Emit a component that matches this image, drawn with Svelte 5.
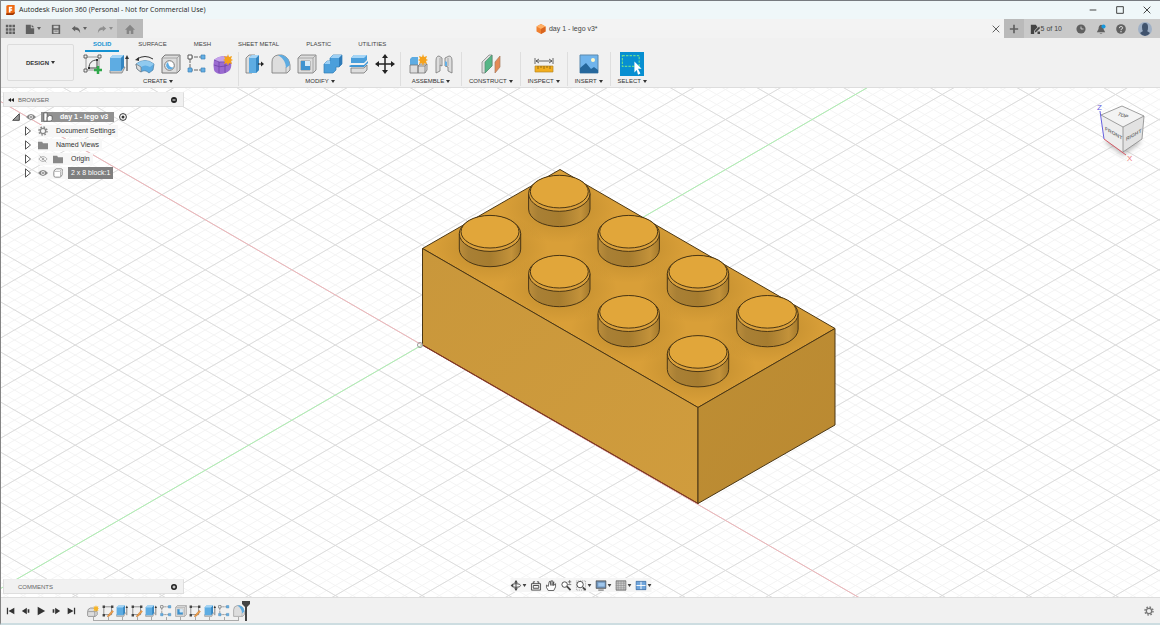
<script lang="ts">
	type Group = { label: string; tools: string[] };

	const tabs = ['SOLID', 'SURFACE', 'MESH', 'SHEET METAL', 'PLASTIC', 'UTILITIES'];
	let activeTab = $state('SOLID');

	const groups: Group[] = [
		{ label: 'CREATE', tools: ['sketch', 'extrude', 'revolve', 'hole', 'pattern', 'form'] },
		{ label: 'MODIFY', tools: ['press', 'fillet', 'shell', 'combine', 'split', 'move'] },
		{ label: 'ASSEMBLE', tools: ['component', 'joint'] },
		{ label: 'CONSTRUCT', tools: ['plane'] },
		{ label: 'INSPECT', tools: ['measure'] },
		{ label: 'INSERT', tools: ['image'] },
		{ label: 'SELECT', tools: ['select'] }
	];

	const features = [
		'newBody', 'sketchEdit', 'extrude', 'sketchEdit', 'extrude', 'pattern',
		'shell', 'sketchEdit', 'extrude', 'pattern', 'fillet'
	];

	const playback = ['first', 'prev', 'play', 'next', 'last'];

	// 20x20 tool icons
	const toolIcons: Record<string, string> = {
		sketch:
			'<path d="M3 3h13v13H3z" fill="none" stroke="#999"/><path d="M6 14c0-5 3-8 8-8v8z" fill="none" stroke="#444"/><path d="M1 1h3v3H1zM15 1h3v3h-3zM1 15h3v3H1z" fill="#eee" stroke="#444" stroke-width=".8"/><path d="M5 13h2v2H5zM13 5h2v2h-2z" fill="#333"/><path d="M11 16h8M15 12v8" stroke="#2fa84a" stroke-width="2.5"/>',
		sketchEdit:
			'<path d="M3 3h13v13H3z" fill="none" stroke="#777" stroke-width="1.300"/><path d="M1 1h4v4H1zM15 1h4v4h-4zM1 15h4v4H1z" fill="#444"/><path d="M10 17l7-8 2 2-6 7-4 2z" fill="#f0a04b" stroke="#b9671b" stroke-width=".7"/>',
		newBody:
			'<path d="M1 18v-7q0-5 5-6h5q5 1 6 7v4l-3 3H2z" fill="#ddd" stroke="#666"/><path d="M2 11h11v8M13 11l4-2" fill="none" stroke="#777"/><path d="M15 0l1 3 3-1-1 3 2 1-2 1 1 3-3-1-1 3-1-3-3 1 1-3-2-1 2-1-1-3 3 1z" fill="#f5b52b"/>',
		extrude:
			'<path d="M1 16l4-3h11l-3 6H1z" fill="#c9c9c9" stroke="#777" stroke-width=".7"/><path d="M1 4l3-3h11v12l-3 4H1z" fill="#5eace2"/><path d="M1 4l3-3h11l-3 3z" fill="#a5d5f6"/><path d="M12 4l3-3v12l-3 4z" fill="#3485c0"/><path d="M18 17V4" stroke="#333"/><path d="M16 5l2-4 2 4z" fill="#333"/>',
		revolve:
			'<path d="M2 5q8-5 16 0" fill="none" stroke="#333"/><path d="M0 6l4-3v4z" fill="#333"/><path d="M1 10q9-7 18 0l-1 6-4 3q-4-4-8-1l-4-3z" fill="#5eace2" stroke="#477da5" stroke-width=".7"/><path d="M1 10q9-7 18 0l-4 3q-5-3-9 0z" fill="#90caef"/><path d="M1 10l5 3v5l-4-3z" fill="#ddd" stroke="#777" stroke-width=".7"/>',
		hole:
			'<path d="M1 4l3-3h15v15l-3 3H1z" fill="#ddd" stroke="#777"/><path d="M16 4v15M1 4h15l3-3" fill="none" stroke="#999" stroke-width=".8"/><circle cx="8.500" cy="11.500" r="4.800" fill="#fff" stroke="#777"/><path d="M7 8a4 4 0 1 0 5.500 5.500q-5 0-5.500-5.500z" fill="#5eace2"/>',
		pattern:
			'<path d="M16 3H3v13h13" fill="none" stroke="#666" stroke-dasharray="4 1"/><path d="M1 1h4v4H1z" fill="#fff" stroke="#555"/><path d="M14 1h4v4h-4zM14 14h4v4h-4zM1 14h4v4H1z" fill="#63afe5" stroke="#3f83b5" stroke-width=".7"/>',
		form:
			'<path d="M1 6q4-4 12-4 5 1 5 4 1 6-1 10-4 4-10 4-5-1-6-4-1-6 0-10z" fill="#9a6bd0"/><path d="M1 6q4-4 12-4 5 1 5 4-3 2-6 2-7 1-11-2z" fill="#c4a2ea"/><path d="M1 11q6 3 11 1 4-1 6-3M1 6q5 3 11 2l6-2M6 8v11M12 8v11" fill="none" stroke="#6e42a7" stroke-width=".8"/><path d="M15 0l1 3 3-1-1 3 2 1-2 1 1 3-3-1-1 3-1-3-3 1 1-3-2-1 2-1-1-3 3 1z" fill="#f5a21b"/>',
		press:
			'<path d="M1 4l3-3h6L7 4v15H1z" fill="#ddd" stroke="#777" stroke-width=".8"/><path d="M4 4l3-3h7v15l-3 3H4z" fill="#5eace2"/><path d="M11 4l3-3v15l-3 3z" fill="#3485c0"/><path d="M4 4l3-3h7l-3 3z" fill="#a5d5f6"/><path d="M13 10h4" stroke="#222"/><path d="M16 7.500l3 2.500-3 2.500z" fill="#222"/>',
		fillet:
			'<path d="M1 19V8q0-6 6-7h4q7 2 8 10v5l-3 3z" fill="#ddd" stroke="#777" stroke-width=".8"/><path d="M15 19v-6" fill="none" stroke="#999" stroke-width=".8"/><path d="M7 1h4q7 2 8 10l-4 3q0-8-8-13z" fill="#5eace2"/>',
		shell:
			'<path d="M1 4l3-3h15v15l-3 3H1z" fill="#ddd" stroke="#777" stroke-width=".8"/><path d="M16 4v15M1 4h15l3-3" fill="none" stroke="#999" stroke-width=".8"/><path d="M4 7h9v9H4z" fill="#fff" stroke="#888" stroke-width=".8"/><path d="M4 7h4v5h5v4H4z" fill="#3f93d0"/><path d="M8 7h5v5H8z" fill="#d5eaf8"/>',
		combine:
			'<path d="M7 4l3-3h9v9l-3 3h-3v3l-3 3H1v-9l3-3h3z" fill="#4b9fdb" stroke="#347eb5" stroke-width=".7"/><path d="M7 4l3-3h9l-3 3zM1 10l3-3h3v3z" fill="#9dd0f5"/><path d="M16 4l3-3v9l-3 3z" fill="#2f7bb8"/>',
		split:
			'<path d="M2 4l3-3h13v5l-3 3H2z" fill="#4b9fdb"/><path d="M2 4l3-3h13l-3 3z" fill="#a5d5f6"/><path d="M0 12l2-1h13l4-4v2l-4 4H1z" fill="#3f96d5"/><path d="M2 14h13l3-3v5l-3 3H2z" fill="#ddd" stroke="#777" stroke-width=".8"/>',
		move:
			'<path d="M10 3v14M3 10h14" stroke="#222" stroke-width="1.500"/><path d="M10 0l3 4H7zM10 20l3-4H7zM0 10l4-3v6zM20 10l-4-3v6z" fill="#222"/>',
		component:
			'<path d="M2 5l2-2h6v8H2z" fill="#5eace2"/><path d="M2 11h8v8H2zM10 12l2-2h7v6l-2 3h-7z" fill="#ddd" stroke="#777" stroke-width=".8"/><path d="M10 12h7v7M17 12l2-2" fill="none" stroke="#777" stroke-width=".8"/><path d="M15 0l1 3 3-1-1 3 2 1-2 1 1 3-3-1-1 3-1-3-3 1 1-3-2-1 2-1-1-3 3 1z" fill="#f5a21b"/>',
		joint:
			'<path d="M2 7q0-5 3-5l3 2v8l-2-1v6l-4 2zM18 7q0-5-3-5l-4 2v8l3 1v4l4 2z" fill="#ddd" stroke="#777" stroke-width=".8"/><path d="M6 4v7M14 4v8" stroke="#999" stroke-width=".8"/><path d="M11 7v5h2V8z" fill="#63afe5"/>',
		plane:
			'<path d="M1 8l7-7h3v11l-7 7H1z" fill="#ddd" stroke="#888" stroke-width=".8"/><path d="M4 8l7-7v11l-7 7z" fill="#56b586" stroke="#528e70" stroke-width=".7"/><path d="M14 8l5-6v11l-5 6z" fill="#e58a55" stroke="#a87b5e" stroke-width=".7"/>',
		measure:
			'<path d="M1 12h18v6H1z" fill="#f3ae1e" stroke="#b78825" stroke-width=".7"/><path d="M4 12v3M7 12v2M10 12v3M13 12v2M16 12v3" stroke="#715310" stroke-width=".7"/><path d="M1 4v6M19 4v6M2 7h16M5 5L2 7l3 2M15 5l3 2-3 2" fill="none" stroke="#444" stroke-width=".8"/>',
		image:
			'<path d="M1 1h18v18H1z" fill="#70b4ec" stroke="#5b89ad"/><circle cx="14" cy="6" r="2" fill="#fff8c9"/><path d="M1 19v-5l6-5 5 6 3-2 4 3v3z" fill="#25679c"/>',
		select:
			'<path d="M0 0h20v20H0z" fill="#078fd1"/><path d="M2 3h14v9H2z" fill="none" stroke="#67da94" stroke-dasharray="2 1"/><path d="M12 8l6 6h-3l2 4-2 1-1-4-2 2z" fill="#fff"/>'
	};

	// 12x12 monochrome icons
	const smallIcons: Record<string, string> = {
		grid: '<path d="M1 1h3v3H1zM5 1h3v3H5zM9 1h3v3H9zM1 5h3v3H1zM5 5h3v3H5zM9 5h3v3H9zM1 9h3v3H1zM5 9h3v3H5zM9 9h3v3H9z"/>',
		file: '<path d="M1 1h6v4h4v7H1zM8 1l3 3H8z"/>',
		save: '<path d="M1 1h10v11H1z"/><path d="M3 2h6v3H3zM3 7h6v4H3z" fill="#c9c9c9"/><path d="M4 8h4v1H4z"/>',
		undo: '<path d="M5 2v2q6 0 6 7Q9 7 5 7v2L1 5.500z"/>',
		redo: '<path d="M7 2v2Q1 4 1 11q2-4 6-4v2l4-3.500z"/>',
		home: '<path d="M6 1l6 6h-2v5H7V8H5v4H2V7H0z"/>',
		plus: '<path d="M5 1h2v4h4v2H7v4H5V7H1V5h4z"/>',
		close: '<path d="M2 2l8 8M10 2l-8 8" stroke="currentColor"/>',
		minimize: '<path d="M2 6h8" stroke="currentColor"/>',
		maximize: '<path d="M2 2h8v8H2z" fill="none" stroke="currentColor"/>',
		jobs: '<path d="M1 1h6l2 3-4 4v4H1z"/><path d="M6 8l5-5 1 2-5 5H6z"/><path d="M9 9h3v3H9z"/>',
		clock: '<circle cx="6" cy="6" r="5.500"/><path d="M6 3v3h3" fill="none" stroke="#ddd"/>',
		bell: '<path d="M6 1q3 1 3 5l2 4H1l2-4q0-4 3-5zM4 11h4l-2 1z"/><circle cx="9" cy="3" r="2.500" fill="#1798dd"/>',
		help: '<circle cx="6" cy="6" r="5.800"/><path d="M4 5q0-2 2-2t2 1.500Q8 6 6 6.500v1" fill="none" stroke="#eee"/><circle cx="6" cy="9.200" r=".8" fill="#eee"/>',
		first: '<path d="M1 2h1.500v8H1zM10 2v8L3 6z"/>',
		prev: '<path d="M7 2v8L1 6zM8 4h2v4H8z"/>',
		play: '<path d="M2 1l9 5-9 5z"/>',
		next: '<path d="M5 2v8l6-4zM2 4h2v4H2z"/>',
		last: '<path d="M9.500 2H11v8H9.500zM2 2v8l7-4z"/>',
		gear: '<circle cx="6" cy="6" r="3.200" fill="none" stroke="currentColor" stroke-width="1.500"/><circle cx="6" cy="6" r="4.800" fill="none" stroke="currentColor" stroke-width="1.700" stroke-dasharray="1.900 1.870"/>',
		eye: '<path d="M0 6q6-7 12 0-6 7-12 0z"/><circle cx="6" cy="6" r="2.300" fill="#eee"/><circle cx="6" cy="6" r="1.200"/>',
		eyeOff: '<g opacity=".7"><path d="M1 6q5-6 10 0-5 6-10 0zM2 2l8 8" fill="none" stroke="currentColor"/><circle cx="6" cy="6" r="1.500"/></g>',
		folder: '<path d="M0 2h5l1 2h6v7H0z"/>',
		body: '<path d="M1 5q0-3 3-4h6q2 0 1 3v4q-1 3-3 3H3q-2 0-2-2z" fill="#fff" stroke="#777"/><path d="M9 4v6M2 4h6l2-2" fill="none" stroke="#aaa"/>',
		root: '<path d="M1 1h4v10H1z" fill="#fff" stroke="#555"/><path d="M5 6l3-2 3 1v4l-2 2H5z" fill="#fff" stroke="#555"/>',
		open: '<path d="M10 2v8H2z" fill="#999" stroke="#333"/>',
		closed: '<path d="M3 1l6 5-6 5z" fill="#fff" stroke="#333"/>',
		orbit: '<path d="M6 1v10" stroke="currentColor"/><ellipse cx="6" cy="6" rx="5" ry="2" fill="none" stroke="currentColor"/><path d="M6 0l2 3H4zM6 12l2-3H4zM0 6l3-2v4z"/>',
		look: '<path d="M1 4h10v7H1zM3 4V2h2M9 4V2H7M3 6h6v3H3z" fill="none" stroke="currentColor"/>',
		pan: '<path d="M3 7L1 5.500q-1 2 2 6h6l2-4V4L9 6V2L8 6V1H6v5L5 1 4 2z" fill="#fff" stroke="currentColor" stroke-width=".9"/>',
		zoom: '<circle cx="4.500" cy="5" r="3" fill="#fff" stroke="currentColor"/><path d="M7 7l4 4" stroke="currentColor" stroke-width="2"/><path d="M8 2h4M10 0v4M8 5h4" stroke="currentColor" stroke-width=".7"/>',
		fit: '<path d="M1 1h10v10H1z" fill="none" stroke="#999" stroke-dasharray="1 1"/><circle cx="5" cy="5" r="3.500" fill="#fff" stroke="currentColor"/><path d="M8 8l3 3" stroke="currentColor" stroke-width="2"/>',
		display: '<path d="M.5 1h11v8H.5z" fill="#7095bd" stroke="#555"/><path d="M3 3h7v4H3z" fill="#9fc6eb"/><path d="M3 11h6" stroke="#555"/>',
		lines: '<path d="M.5 1h11v10H.5z" fill="#ccc" stroke="#666"/><path d="M3 1v10M6 1v10M9 1v10M0 3.500h11M0 6h11M0 8.500h11" stroke="#888" stroke-width=".6"/>',
		views: '<path d="M.5 1.500h11v9H.5z" fill="#6fa5dc" stroke="#4574a8"/><path d="M6 2v8M1 6h10" stroke="#fff"/>'
	};

	const navTools = [
		{ icon: 'orbit', menu: true },
		{ icon: 'look', menu: false },
		{ icon: 'pan', menu: false },
		{ icon: 'zoom', menu: false },
		{ icon: 'fit', menu: true },
		{ icon: 'display', menu: true },
		{ icon: 'lines', menu: true },
		{ icon: 'views', menu: true }
	];

	const tree = [
		{ label: 'Document Settings', icons: ['gear'] },
		{ label: 'Named Views', icons: ['folder'] },
		{ label: 'Origin', icons: ['eyeOff', 'folder'] },
		{ label: '2 x 8 block:1', icons: ['eye', 'body'], selected: true }
	];

	// isometric ground grid around the model origin
	const origin = { x: 422, y: 345 };
	const slope = 0.5779;
	const cell = 50.1;

	function gridPath(step: number) {
		let d = '';
		const count = Math.ceil(1100 / step);
		for (let k = -count; k <= count; k++) {
			const y = origin.y + k * step;
			d += `M${origin.x - 800} ${y - 800 * slope}L${origin.x + 1200} ${y + 1200 * slope}`;
			d += `M${origin.x - 800} ${y + 800 * slope}L${origin.x + 1200} ${y - 1200 * slope}`;
		}
		return d;
	}

	const minorGrid = gridPath(cell / 5);
	const majorGrid = gridPath(cell);

	// back to front, so nearer studs cover the ones behind
	const studs = [
		[559.3, 191.6],
		[490, 231.7],
		[628.7, 231.7],
		[559.3, 271.7],
		[698, 271.7],
		[628.7, 311.8],
		[767.4, 311.8],
		[698, 351.9]
	];
</script>

{#snippet tool(name: string)}
	<svg class="tool-icon" viewBox="0 0 20 20" aria-hidden="true">{@html toolIcons[name]}</svg>
{/snippet}

{#snippet glyph(name: string)}
	<svg class="glyph" viewBox="0 0 12 12" aria-hidden="true">{@html smallIcons[name]}</svg>
{/snippet}

{#snippet caret()}
	<svg class="caret" viewBox="0 0 4 3" aria-hidden="true"><path d="M0 0h4L2 3z" /></svg>
{/snippet}

<div class="app">
	<header class="titlebar">
		<svg class="logo" viewBox="0 0 10 12" aria-hidden="true">
			<path d="M0 1l2-1h8v10l-2 2H0z" fill="#ee6a12" />
			<path d="M0 10h8l2-2v2l-2 2H0z" fill="#9c3504" />
			<path d="M3 2h4v2H5v1h2v2H5v2H3z" fill="#fff" />
		</svg>
		<h1>Autodesk Fusion 360 (Personal - Not for Commercial Use)</h1>
		<div class="window-buttons">
			<button aria-label="Minimize">{@render glyph('minimize')}</button>
			<button aria-label="Maximize">{@render glyph('maximize')}</button>
			<button aria-label="Close window">{@render glyph('close')}</button>
		</div>
	</header>

	<div class="appbar">
		<div class="quick">
			<button aria-label="Data panel">{@render glyph('grid')}</button>
			<button aria-label="File">{@render glyph('file')}{@render caret()}</button>
			<button aria-label="Save">{@render glyph('save')}</button>
			<button aria-label="Undo">{@render glyph('undo')}{@render caret()}</button>
			<button class="muted" aria-label="Redo">{@render glyph('redo')}{@render caret()}</button>
		</div>
		<button class="home" aria-label="Home">{@render glyph('home')}</button>
		<div class="document">
			<svg class="doc-icon" viewBox="0 0 10 10" aria-hidden="true">
				<path d="M5 0l4.500 2.500v5L5 10 .5 7.500v-5z" fill="#f08030" />
				<path d="M5 0l4.500 2.500L5 5 .5 2.500z" fill="#ffb066" />
				<path d="M5 5l4.500-2.500v5L5 10z" fill="#d9651f" />
			</svg>
			<span>day 1 - lego v3*</span>
			<button class="close-doc" aria-label="Close document">{@render glyph('close')}</button>
		</div>
		<button class="new-doc" aria-label="New document">{@render glyph('plus')}</button>
		<div class="status">
			<button class="jobs">{@render glyph('jobs')}<span>5 of 10</span></button>
			<button aria-label="Job status">{@render glyph('clock')}</button>
			<button aria-label="Notifications">{@render glyph('bell')}</button>
			<button aria-label="Help">{@render glyph('help')}</button>
			<button aria-label="Account">
				<svg class="avatar" viewBox="0 0 14 14" aria-hidden="true">
					<circle cx="7" cy="7" r="7" fill="#9fb0c6" />
					<path d="M4 5q0-4 3-4t3 4-1 4l3 2q-2 3-5 3t-5-3l3-2Q4 8 4 5z" fill="#40536d" />
				</svg>
			</button>
		</div>
	</div>

	<div class="ribbon">
		<button class="workspace">DESIGN {@render caret()}</button>
		<div class="ribbon-main">
			<nav class="tabs">
				{#each tabs as tab}
					<button class:active={tab === activeTab} onclick={() => (activeTab = tab)}>{tab}</button>
				{/each}
			</nav>
			<div class="groups">
				{#each groups as group}
					<div class="group" class:narrow={group.tools.length < 3}>
						<div class="tools">
							{#each group.tools as name}
								<button class:selected={name === 'select'} aria-label={name}>{@render tool(name)}</button>
							{/each}
						</div>
						<button class="group-label">{group.label} {@render caret()}</button>
					</div>
				{/each}
			</div>
		</div>
	</div>

	<main class="viewport">
		<svg class="scene" viewBox="1 88 1159 509" preserveAspectRatio="xMidYMid slice" role="img" aria-label="Brick model">
			<defs>
				<linearGradient id="side">
					<stop offset="0" stop-color="#bd8e3b" />
					<stop offset="0.15" stop-color="#a98035" />
					<stop offset="0.5" stop-color="#a67c2f" />
					<stop offset="0.85" stop-color="#c3923a" />
					<stop offset="1" stop-color="#a57a2c" />
				</linearGradient>
				<linearGradient id="left" x1="0" y1="0" x2="1" y2="1">
					<stop offset="0" stop-color="#c9973b" />
					<stop offset="1" stop-color="#d09c3d" />
				</linearGradient>
				<linearGradient id="right" x1="0" y1="0" x2="1" y2="1">
					<stop offset="0" stop-color="#be8e34" />
					<stop offset="1" stop-color="#ba8931" />
				</linearGradient>
				<radialGradient id="shade">
					<stop offset="0.5" stop-color="#a87a24" stop-opacity="0.3" />
					<stop offset="1" stop-color="#a87a24" stop-opacity="0" />
				</radialGradient>
				<clipPath id="topFace"><path d="M422.500 248.500L560 169.500 835 328.500 698 407.500z" /></clipPath>
			</defs>
			<path class="minor" d={minorGrid} />
			<path class="major" d={majorGrid} />
			<path class="axis-x" d="M-378 -117.300L1622 1038.500" />
			<path class="axis-y" d="M-378 807.300L1622 -348.500" />

			<g class="brick">
				<path d="M422.500 248.500L560 169.500 835 328.500 698 407.500z" fill="#d99f38" />
				<g clip-path="url(#topFace)" stroke="none">
					{#each studs as [x, y]}
						<ellipse cx={x} cy={y + 17} rx="58" ry="34" fill="url(#shade)" />
					{/each}
				</g>
				<path d="M422.500 248.500L698 407.500V503.500L422.500 345z" fill="url(#left)" />
				<path d="M698 407.500L835 328.500V425L698 503.500z" fill="url(#right)" />
				<path class="base" d="M422.500 345L698 503.500" />
				{#each studs as [x, y]}
					<path d="M{x - 30.7} {y + 2}v15.400a30.700 17.600 0 0 0 61.400 0v-15.400z" fill="url(#side)" />
					<ellipse cx={x} cy={y + 2} rx="30.700" ry="17.700" fill="#d9a03c" />
					<ellipse cx={x} cy={y} rx="29" ry="16.300" fill="#e1a63a" />
				{/each}
			</g>
			<circle class="origin" cx="420" cy="345" r="2.500" />
		</svg>

		<section class="panel browser">
			<span class="collapse" aria-hidden="true">
				<svg viewBox="0 0 6 4"><path d="M3 0v4L0 2zM6 0v4L3 2z" /></svg>
			</span>
			<h2>BROWSER</h2>
			<button class="dot" aria-label="Collapse browser">
				<svg viewBox="0 0 6 6"><circle cx="3" cy="3" r="3" /><path d="M1.500 3h3" stroke="#fff" /></svg>
			</button>
		</section>

		<ul class="tree">
			<li class="root">
				{@render glyph('open')}
				{@render glyph('eye')}
				<span class="name root-name">{@render glyph('root')}day 1 - lego v3</span>
				<svg class="radio" viewBox="0 0 8 8" aria-hidden="true">
					<circle cx="4" cy="4" r="3.400" fill="#fff" stroke="#333" />
					<circle cx="4" cy="4" r="1.500" fill="#333" />
				</svg>
			</li>
			{#each tree as node}
				<li>
					<span class="expander">{@render glyph('closed')}</span>
					<span class="item">
						{#each node.icons as icon}{@render glyph(icon)}{/each}
						<span class="name" class:selected={node.selected}>{node.label}</span>
					</span>
				</li>
			{/each}
		</ul>

		<svg class="viewcube" viewBox="0 0 48 66" role="img" aria-label="View cube">
			<defs><filter id="soft"><feGaussianBlur stdDeviation="2" /></filter></defs>
			<path d="M9 44l19 14 19-14-19-9z" fill="#999" opacity="0.6" filter="url(#soft)" />
			<path d="M6 17L27 8 49 18 28 29z" fill="#f3f3f3" />
			<path d="M6 17L28 29V54L9 41z" fill="#ededed" />
			<path d="M28 29L49 18 47 41 28 54z" fill="#e2e2e2" />
			<path d="M6 17L27 8 49 18 28 29zM28 29V54M49 18L47 41 28 54" fill="none" stroke="#888" stroke-width="0.8" />
			<path d="M5 13L9 41" stroke="#6660df" />
			<path d="M9 41L31 57" stroke="#d65a66" />
			<text class="z" x="2" y="12">Z</text>
			<text class="x" x="32" y="63">X</text>
			<text class="face" transform="translate(10 32) skewY(30)">FRONT</text>
			<text class="face" transform="translate(31 43) skewY(-30)">RIGHT</text>
			<text class="face" transform="translate(22 17) rotate(20) skewX(-20)">TOP</text>
		</svg>

		<section class="panel comments">
			<h2>COMMENTS</h2>
			<button class="dot" aria-label="Add comment">
				<svg viewBox="0 0 6 6"><circle cx="3" cy="3" r="3" /><path d="M1.500 3h3M3 1.500v3" stroke="#fff" /></svg>
			</button>
		</section>

		<div class="navbar">
			{#each navTools as item}
				<button aria-label={item.icon}>
					{@render glyph(item.icon)}{#if item.menu}{@render caret()}{/if}
				</button>
			{/each}
		</div>
	</main>

	<footer class="timeline">
		<div class="playback">
			{#each playback as name}
				<button aria-label={name}>{@render glyph(name)}</button>
			{/each}
		</div>
		<div class="history">
			<div class="features">
				{#each features as name}
					<button aria-label={name}>{@render tool(name)}</button>
				{/each}
			</div>
			<div class="scale">
				{#each features as _}<i></i>{/each}
			</div>
		</div>
		<svg class="marker" viewBox="0 0 8 20" aria-hidden="true">
			<path d="M0 0h8v3L5 6v14H3V6L0 3z" />
		</svg>
		<button class="settings" aria-label="Timeline settings">{@render glyph('gear')}</button>
	</footer>
</div>

<style>
	:global(body) {
		margin: 0;
	}

	.app {
		display: flex;
		flex-direction: column;
		box-sizing: border-box;
		min-height: 100vh;
		border-left: 1px solid #858585;
		border-bottom: 2px solid #cddde1;
		background: #f1f1f1;
		color: #444;
		font-family: 'Liberation Sans', Arial, sans-serif;
		font-size: 6px;
		line-height: 8px;
	}

	button {
		display: flex;
		align-items: center;
		justify-content: center;
		padding: 0;
		border: 0;
		background: none;
		color: inherit;
		font: inherit;
		cursor: pointer;
	}

	h1,
	h2,
	ul {
		margin: 0;
		padding: 0;
		font-size: 6px;
		font-weight: normal;
	}

	svg {
		display: block;
		flex: none;
	}

	.glyph {
		width: 10px;
		height: 10px;
		fill: currentColor;
	}

	.tool-icon {
		width: 20px;
		height: 20px;
	}

	.caret {
		width: 4px;
		height: 3px;
		margin-left: 2px;
		fill: currentColor;
	}

	/* title bar */
	.titlebar {
		display: flex;
		align-items: center;
		box-sizing: border-box;
		height: 19px;
		padding: 0 8px 0 5px;
		border-top: 1px solid #777b80;
		background: #eff7f9;
	}

	.logo {
		width: 9px;
		height: 10px;
		margin-right: 4px;
	}

	h1 {
		color: #222;
		font-family: 'Open Sans', 'Noto Sans', sans-serif;
		font-size: 7px;
	}

	.window-buttons {
		display: flex;
		gap: 17px;
		margin-left: auto;
		color: #222;
	}

	/* application bar */
	.appbar {
		display: flex;
		height: 19px;
		background: #c9c9c9;
		color: #606060;
		font-size: 7px;
	}

	.quick {
		display: flex;
		align-items: center;
		justify-content: space-between;
		width: 108px;
		padding: 0 4px;
	}

	.muted {
		color: #8f8f8f;
	}

	.home {
		width: 26px;
		background: #b9b9b9;
		color: #858585;
	}

	.document {
		display: flex;
		flex: 1;
		align-items: center;
		justify-content: center;
		background: #f3f3f3;
		color: #444;
	}

	.doc-icon {
		width: 10px;
		height: 10px;
		margin-left: auto;
		margin-right: 3px;
	}

	.close-doc {
		margin-left: auto;
		margin-right: 3px;
	}

	.new-doc {
		width: 20px;
		background: #bababa;
	}

	.status {
		display: flex;
		align-items: center;
		gap: 10px;
		padding: 0 8px 0 6px;
	}

	.jobs {
		gap: 1px;
		margin-right: 4px;
		color: #444;
	}

	.avatar {
		width: 14px;
		height: 14px;
		margin-left: 2px;
	}

	/* ribbon */
	.ribbon {
		display: flex;
		box-sizing: border-box;
		height: 50px;
		border-bottom: 1px solid #ddd;
		background: #f1f1f1;
	}

	.workspace {
		width: 67px;
		height: 37px;
		margin: 6px 3px 0 6px;
		border: 1px solid #dcdcdc;
		border-radius: 2px;
		color: #333;
		font-weight: bold;
	}

	.tabs {
		display: flex;
		gap: 11px;
		padding-left: 8px;
	}

	.tabs button {
		box-sizing: border-box;
		height: 14px;
		padding: 0 8px;
		border-bottom: 2px solid transparent;
	}

	.tabs .active {
		border-bottom-color: #1592d2;
		color: #1592d2;
		font-weight: bold;
	}

	.groups {
		display: flex;
	}

	.group {
		display: flex;
		flex-direction: column;
		align-items: center;
		padding: 0 5px 0 6px;
		border-right: 1px solid #dedede;
	}

	.group.narrow {
		padding: 0 7px;
	}

	.group:last-child {
		border-right: 0;
	}

	.tools {
		display: flex;
		align-items: center;
		gap: 6px;
		height: 24px;
	}

	.tools .selected .tool-icon {
		width: 24px;
		height: 24px;
	}

	.group-label {
		height: 10px;
		color: #333;
	}

	/* viewport */
	.viewport {
		position: relative;
		flex: 1;
		overflow: hidden;
		background: #fff;
	}

	.scene {
		position: absolute;
		inset: 0;
		width: 100%;
		height: 100%;
	}

	.minor,
	.major,
	.axis-x,
	.axis-y {
		fill: none;
		stroke-width: 1;
	}

	.minor {
		stroke: #f4f4f4;
	}

	.major {
		stroke: #dcdcdc;
	}

	.axis-x {
		stroke: #eeb4b8;
	}

	.axis-y {
		stroke: #adf0b0;
	}

	.brick {
		stroke: #4a3614;
		stroke-width: 1;
		stroke-linejoin: round;
	}

	.base {
		stroke: #8a3523;
	}

	.origin {
		fill: none;
		stroke: #999;
	}

	.panel {
		position: absolute;
		left: 2px;
		display: flex;
		align-items: center;
		box-sizing: border-box;
		width: 181px;
		height: 15px;
		padding: 0 6px 0 4px;
		border: 1px solid #dedede;
		border-top-color: #eee;
		background: #f1f1f1;
		color: #666;
	}

	.browser {
		top: 4px;
	}

	.comments {
		bottom: 3px;
		padding-left: 14px;
	}

	.collapse {
		width: 10px;
	}

	.collapse svg {
		width: 6px;
		height: 4px;
		fill: #222;
	}

	.dot {
		margin-left: auto;
	}

	.dot svg {
		width: 6px;
		height: 6px;
		fill: #222;
	}

	.tree {
		position: absolute;
		top: 22px;
		left: 10px;
		color: #333;
		font-size: 7px;
		list-style: none;
	}

	.tree li {
		display: flex;
		align-items: center;
		height: 14px;
		padding-left: 12px;
	}

	.tree .root {
		gap: 5px;
		padding-left: 0;
	}

	.tree .glyph {
		color: #888;
	}

	.tree .expander {
		margin-right: 5px;
	}

	.item {
		display: flex;
		align-items: center;
		gap: 5px;
		background: #f7f7f7;
	}

	.name {
		padding: 1px 3px;
		line-height: 10px;
	}

	.root-name {
		display: flex;
		align-items: center;
		gap: 7px;
		padding: 0 6px 0 2px;
		background: #929292;
		color: #fff;
		font-weight: bold;
	}

	.name.selected {
		background: #7f7f7f;
		color: #fff;
	}

	.radio {
		width: 8px;
		height: 8px;
	}

	.viewcube {
		position: absolute;
		top: 10px;
		right: 17px;
		width: 48px;
		height: 66px;
		overflow: visible;
	}

	.viewcube .z {
		fill: #6660df;
		font-size: 8px;
	}

	.viewcube .x {
		fill: #ee7474;
		font-size: 8px;
	}

	.face {
		fill: #777;
		font-size: 5px;
		font-weight: bold;
	}

	.navbar {
		position: absolute;
		bottom: 5px;
		left: 50%;
		display: flex;
		align-items: center;
		gap: 4px;
		height: 14px;
		background: #f5f5f5;
		transform: translateX(-50%);
	}

	.navbar .glyph {
		width: 11px;
		height: 11px;
	}

	.navbar .caret {
		margin-left: 1px;
	}

	/* timeline */
	.timeline {
		display: flex;
		box-sizing: border-box;
		height: 26px;
		padding: 0 6px 0 5px;
		border-top: 1px solid #ddd;
	}

	.playback {
		display: flex;
		align-items: center;
		gap: 5px;
		margin-right: 11px;
		color: #333;
	}

	.history {
		display: flex;
		flex-direction: column;
		justify-content: flex-end;
		width: 158px;
		padding-bottom: 2px;
	}

	.features {
		display: flex;
		justify-content: space-between;
	}

	.features .tool-icon {
		width: 12px;
		height: 12px;
	}

	.scale {
		display: flex;
		justify-content: space-between;
		margin: 0 6px;
		border-bottom: 1px solid #aaa;
	}

	.scale i {
		width: 1px;
		height: 3px;
		background: #aaa;
	}

	.marker {
		align-self: center;
		width: 8px;
		height: 20px;
		margin-left: -3px;
		fill: #444;
	}

	.settings {
		margin-left: auto;
		color: #777;
	}
</style>
